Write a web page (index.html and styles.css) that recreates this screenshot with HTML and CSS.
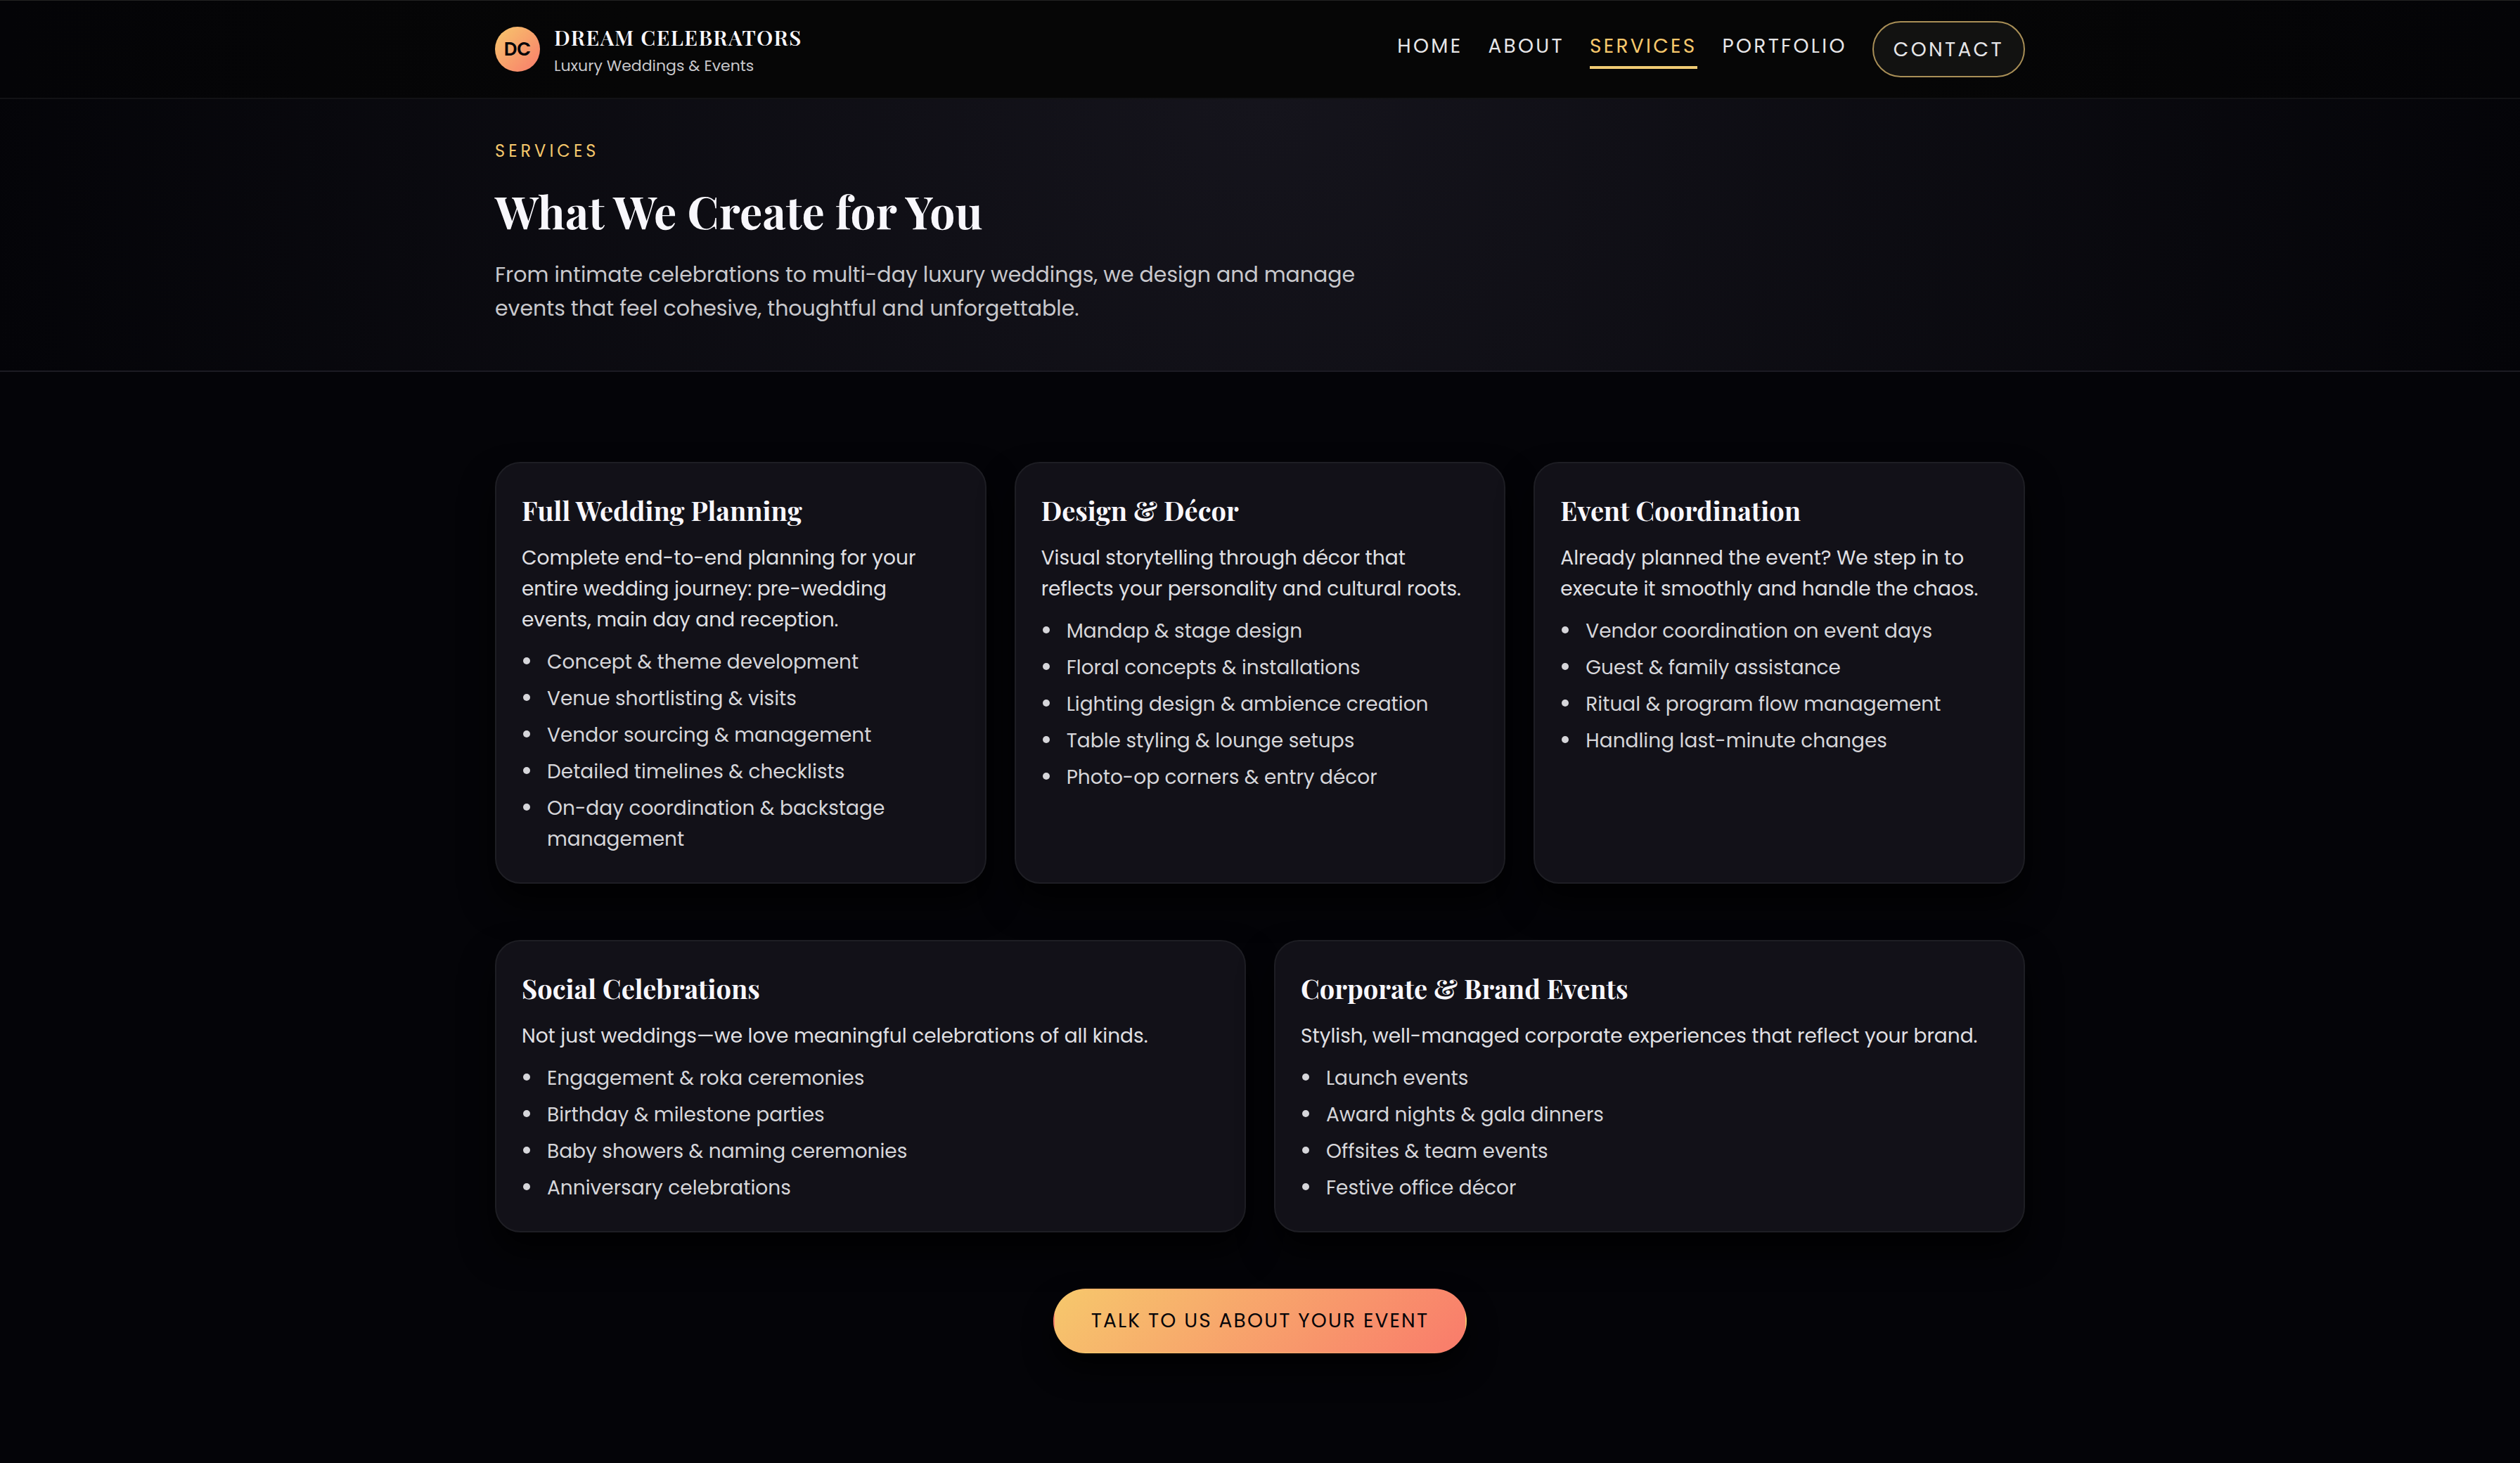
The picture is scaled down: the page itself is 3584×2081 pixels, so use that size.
FILE: index.html
```
<!DOCTYPE html>
<html lang="en">
<head>
  <meta charset="utf-8">
  <meta name="viewport" content="width=device-width, initial-scale=1.0">
  <title>Services | Dream Celebrators</title>
  <link rel="stylesheet" href="styles.css">
</head>
<body>
  <!-- Header -->
  <header class="site-header">
    <div class="container header-inner">
      <a class="brand" href="#">
        <span class="brand-logo">DC</span>
        <span class="brand-text">
          <span class="brand-name">Dream Celebrators</span>
          <span class="brand-tagline">Luxury Weddings &amp; Events</span>
        </span>
      </a>
      <nav class="nav">
        <a class="nav-link" href="#">Home</a>
        <a class="nav-link" href="#">About</a>
        <a class="nav-link active" href="#">Services</a>
        <a class="nav-link" href="#">Portfolio</a>
        <a class="nav-cta" href="#">Contact</a>
      </nav>
    </div>
  </header>

  <!-- Page hero -->
  <section class="page-hero">
    <div class="container">
      <p class="eyebrow">Services</p>
      <h1>What We Create for You</h1>
      <p class="lead">From intimate celebrations to multi-day luxury weddings, we design and manage events that feel cohesive, thoughtful and unforgettable.</p>
    </div>
  </section>

  <!-- Services -->
  <main class="section">
    <div class="container">
      <div class="grid grid-3">
        <article class="card">
          <h3>Full Wedding Planning</h3>
          <p>Complete end-to-end planning for your entire wedding journey: pre-wedding events, main day and reception.</p>
          <ul class="list">
            <li>Concept &amp; theme development</li>
            <li>Venue shortlisting &amp; visits</li>
            <li>Vendor sourcing &amp; management</li>
            <li>Detailed timelines &amp; checklists</li>
            <li>On-day coordination &amp; backstage management</li>
          </ul>
        </article>
        <article class="card">
          <h3>Design &amp; Décor</h3>
          <p>Visual storytelling through décor that reflects your personality and cultural roots.</p>
          <ul class="list">
            <li>Mandap &amp; stage design</li>
            <li>Floral concepts &amp; installations</li>
            <li>Lighting design &amp; ambience creation</li>
            <li>Table styling &amp; lounge setups</li>
            <li>Photo-op corners &amp; entry décor</li>
          </ul>
        </article>
        <article class="card">
          <h3>Event Coordination</h3>
          <p>Already planned the event? We step in to execute it smoothly and handle the chaos.</p>
          <ul class="list">
            <li>Vendor coordination on event days</li>
            <li>Guest &amp; family assistance</li>
            <li>Ritual &amp; program flow management</li>
            <li>Handling last-minute changes</li>
          </ul>
        </article>
      </div>

      <div class="grid grid-2">
        <article class="card">
          <h3>Social Celebrations</h3>
          <p>Not just weddings—we love meaningful celebrations of all kinds.</p>
          <ul class="list">
            <li>Engagement &amp; roka ceremonies</li>
            <li>Birthday &amp; milestone parties</li>
            <li>Baby showers &amp; naming ceremonies</li>
            <li>Anniversary celebrations</li>
          </ul>
        </article>
        <article class="card">
          <h3>Corporate &amp; Brand Events</h3>
          <p>Stylish, well-managed corporate experiences that reflect your brand.</p>
          <ul class="list">
            <li>Launch events</li>
            <li>Award nights &amp; gala dinners</li>
            <li>Offsites &amp; team events</li>
            <li>Festive office décor</li>
          </ul>
        </article>
      </div>

      <div class="section-cta">
        <a class="btn-primary" href="#">Talk to us about your event</a>
      </div>
    </div>
  </main>
</body>
</html>
```
FILE: styles.css
```
:root {
  --bg: #040408;
  --card: #121118;
  --gold: #f6c86c;
  --coral: #f97b6b;
  --text: #f8f7fc;
  --muted: #c8c8cc;
}

* {
  box-sizing: border-box;
  margin: 0;
  padding: 0;
}

body {
  min-height: 100vh;
  background: var(--bg);
  color: var(--text);
  font-family: Poppins, Inter, sans-serif;
  font-size: 28px;
  line-height: 44px;
}

a {
  color: inherit;
  text-decoration: none;
}

.container {
  width: 2176px;
  margin: 0 auto;
}

/* Header */
.site-header {
  padding: 29px 0;
  background: linear-gradient(90deg, #040407, #060606 25%, #060606 75%, #040407);
  border-top: 1px solid #232323;
  border-bottom: 2px solid #121215;
}

.header-inner {
  display: flex;
  align-items: center;
  justify-content: space-between;
  height: 80px;
}

.brand {
  display: flex;
  align-items: center;
  gap: 20px;
}

.brand-logo {
  display: flex;
  align-items: center;
  justify-content: center;
  width: 64px;
  height: 64px;
  border-radius: 50%;
  background: linear-gradient(135deg, var(--gold), var(--coral));
  color: #050509;
  font-size: 26px;
  font-weight: 600;
}

.brand-text {
  display: flex;
  flex-direction: column;
}

.brand-name {
  font-family: "Playfair Display", "Liberation Serif", serif;
  font-size: 30px;
  font-weight: 600;
  line-height: 46px;
  letter-spacing: 0.046em;
  text-transform: uppercase;
}

.brand-tagline {
  color: var(--muted);
  font-size: 22px;
  line-height: 35px;
}

.nav {
  display: flex;
  align-items: center;
  gap: 36px;
  color: #e6e6e8;
  letter-spacing: 0.118em;
  text-transform: uppercase;
}

.nav-link {
  position: relative;
  padding: 2px 0 10px;
}

.nav-link.active {
  color: var(--gold);
}

.nav-link.active::after {
  content: "";
  position: absolute;
  left: 0;
  bottom: 0;
  width: 100%;
  height: 4px;
  background: #f0cb74;
}

.nav-cta {
  padding: 17px 28px 15px;
  border: 2px solid #a98f57;
  border-radius: 999px;
  background: #121211;
}

/* Page hero */
.page-hero {
  padding: 55px 0 64px;
  background: radial-gradient(circle at top, #15141c 0%, var(--bg) 100%);
  border-bottom: 2px solid #1c1b23;
}

.eyebrow {
  color: var(--gold);
  font-size: 24px;
  line-height: 38px;
  letter-spacing: 0.21em;
  text-transform: uppercase;
}

h1,
h3 {
  font-family: "Playfair Display", "Liberation Serif", serif;
  font-weight: 700;
}

h1 {
  margin: 28px 0 29px;
  font-size: 64px;
  line-height: 76px;
  letter-spacing: 0.2px;
}

.lead {
  max-width: 1280px;
  color: var(--muted);
  font-size: 30px;
  line-height: 48px;
}

/* Services */
.section {
  padding: 128px 0;
}

.grid {
  display: grid;
  gap: 40px;
  margin-bottom: 80px;
}

.grid-3 {
  grid-template-columns: repeat(3, 1fr);
}

.grid-2 {
  grid-template-columns: repeat(2, 1fr);
}

.card {
  padding: 42px 36px 39px;
  background: var(--card);
  border: 2px solid #1e1e24;
  border-radius: 36px;
  box-shadow: 0 28px 48px rgba(0, 0, 0, 0.8);
}

.card h3 {
  margin-bottom: 21px;
  font-size: 38px;
  line-height: 50px;
}

.card p {
  color: #e0e0e4;
}

.list {
  display: flex;
  flex-direction: column;
  gap: 8px;
  margin-top: 16px;
  color: #d6d6da;
  list-style: none;
}

.list li {
  position: relative;
  padding-left: 36px;
}

.list li::before {
  content: "";
  position: absolute;
  top: 15px;
  left: 2px;
  width: 10px;
  height: 10px;
  border-radius: 50%;
  background: currentColor;
}

/* Call to action */
.section-cta {
  display: flex;
  justify-content: center;
}

.btn-primary {
  padding: 22px 51.5px;
  border: 2px solid transparent;
  border-radius: 999px;
  background: linear-gradient(135deg, var(--gold), var(--coral));
  box-shadow: 0 22px 40px rgba(0, 0, 0, 0.8);
  color: #050509;
  letter-spacing: 0.078em;
  text-transform: uppercase;
}
```
